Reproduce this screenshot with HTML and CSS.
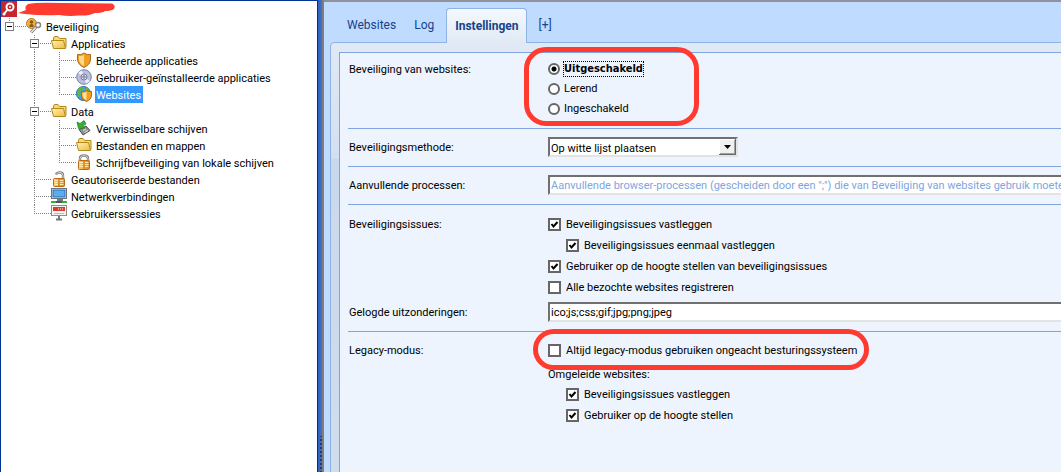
FILE: index.html
```
<!DOCTYPE html>
<html lang="nl">
<head>
<meta charset="UTF-8">
<meta name="viewport" content="width=device-width, initial-scale=1.0">
<title>Beveiliging van websites</title>
<link rel="stylesheet" href="styles.css">
</head>
<body>
    <svg class="defs" aria-hidden="true">
        <defs>
            <linearGradient id="gold" x1="0" y1="0" x2="1" y2="1">
                <stop offset="0" stop-color="#fff3b0"/>
                <stop offset="1" stop-color="#ebbb45"/>
            </linearGradient>
            <linearGradient id="orange" x1="0" y1="0" x2="1" y2="0">
                <stop offset="0" stop-color="#ffd27a"/>
                <stop offset="1" stop-color="#e0811a"/>
            </linearGradient>
            <symbol id="folder" viewBox="0 0 16 16">
                <path d="M2.500 11.500V3L3.500 1.500H7L8.500 3.500H15V12.500" fill="#f6d976" stroke="#b58a1c"/>
                <path d="M.5 5.500H12.500L14.500 13.500H2.500Z" fill="url(#gold)" stroke="#b58a1c"/>
            </symbol>
            <symbol id="shield" viewBox="0 0 16 16">
                <path d="M1.500 2.500Q5 3.500 8 1Q11 3.500 14.500 2.500V7Q14.500 12.500 8 15.500Q1.500 12.500 1.500 7Z" fill="#f0a022" stroke="#a86a14"/>
                <path d="M3 4Q6 4.500 8 2.800V14Q3 11.500 3 7Z" fill="#ffd98a"/>
            </symbol>
            <symbol id="lock" viewBox="0 0 16 16">
                <path d="M4 8V4.500Q4 1.500 8 1.500Q12 1.500 12 4.500V8" fill="none" stroke="#777" stroke-width="2.400"/>
                <path d="M4 8V4.500Q4 1.500 8 1.500Q12 1.500 12 4.500V8" fill="none" stroke="#d4d4d4"/>
                <rect x="2.500" y="6.500" width="11" height="9" rx="1" fill="url(#orange)" stroke="#bb6b17"/>
                <path d="M3.500 8.500H12.500M3.500 10.500H12.500M3.500 12.500H12.500" stroke="#ffe9a8"/>
                <path d="M8 7V15" stroke="#e58e22" stroke-width="2"/>
            </symbol>
        </defs>
    </svg>
    <div class="app">
        <nav class="sidebar">
            <ul class="tree">
                <li class="root">
                    <svg class="root_icon" viewBox="0 0 16 16">
                        <rect width="16" height="16" fill="#c4272d"/>
                        <path d="M7 8L3 13" stroke="#fff" stroke-width="2"/>
                        <circle cx="9" cy="6" r="3.500" fill="none" stroke="#fff" stroke-width="2"/>
                        <circle cx="9" cy="6" r="1" fill="#fff"/>
                        <circle cx="3" cy="13" r="1.500" fill="#fff"/>
                    </svg>
                    <svg class="scribble" viewBox="0 0 99 17">
                        <path d="M1 12Q4 11 9 9Q7 6 11 3Q20 1 45 2Q70 2 95 2.500Q99 4 97 8Q94 10 88 10Q86 12 78 12Q72 15 62 14.500Q52 15.500 42 14Q25 15 8 13Z" fill="#ff3b30"/>
                    </svg>
                </li>
                <li>
                    <span class="cell up"><button class="toggle" aria-label="Beveiliging inklappen"></button></span>
                    <svg class="icon" viewBox="0 0 16 16">
                        <circle cx="5.500" cy="5.500" r="5" fill="#f3b43e" stroke="#b87a1c"/>
                        <circle cx="5.500" cy="4" r="1.800" fill="#8a5a18"/>
                        <path d="M3.500 9V7Q5.500 5 7.500 7V9Z" fill="#8a5a18"/>
                        <path d="M5 14.500L11 8" stroke="#777" stroke-width="3"/>
                        <path d="M5 14.500L11 8" stroke="#e8e8e8" stroke-width="1.500"/>
                        <circle cx="12" cy="7" r="2.500" fill="#fff" stroke="#888" stroke-width="1.500"/>
                    </svg>
                    <a href="#beveiliging">Beveiliging</a>
                </li>
                <li>
                    <span class="cell"></span>
                    <span class="cell branch"><button class="toggle" aria-label="Applicaties inklappen"></button></span>
                    <svg class="icon"><use href="#folder"/></svg>
                    <a href="#applicaties">Applicaties</a>
                </li>
                <li>
                    <span class="cell"></span><span class="cell line"></span><span class="cell branch"></span>
                    <svg class="icon"><use href="#shield"/></svg>
                    <a href="#beheerd">Beheerde applicaties</a>
                </li>
                <li>
                    <span class="cell"></span><span class="cell line"></span><span class="cell branch"></span>
                    <svg class="icon" viewBox="0 0 16 16">
                        <circle cx="8" cy="8" r="7.300" fill="#b9bfdd" stroke="#7a80a6"/>
                        <path d="M8 8L2 4A7 7 0 0 1 6 1.500ZM8 8L14 12A7 7 0 0 1 10 14.500Z" fill="#eceffa"/>
                        <circle cx="8" cy="8" r="3" fill="#dfe2f2" stroke="#7279ab"/>
                        <circle cx="8" cy="8" r="1.200" fill="#fff" stroke="#666"/>
                    </svg>
                    <a href="#gebruiker">Gebruiker-geïnstalleerde applicaties</a>
                </li>
                <li>
                    <span class="cell"></span><span class="cell line"></span><span class="cell last"></span>
                    <svg class="icon" viewBox="0 0 16 16">
                        <circle cx="7.500" cy="7.500" r="7" fill="#4b9be0" stroke="#2b68a8"/>
                        <path d="M2 3Q5 0 8 1L7 4L4 6L5 9L3 11Q0 8 2 3ZM10 1Q13 2 14 5L10 5Z" fill="#5fb648"/>
                        <path d="M5.500 5.500Q8.500 6 10.500 4.500Q12.500 6 15.500 5.500V9Q15.500 13.500 10.500 15.500Q5.500 13.500 5.500 9Z" fill="#f0a022" stroke="#a86a14"/>
                        <path d="M6.500 6.800Q9 7 10.500 6V14Q6.500 12 6.500 9Z" fill="#ffe0a0"/>
                    </svg>
                    <a class="selected" href="#websites">Websites</a>
                </li>
                <li>
                    <span class="cell"></span>
                    <span class="cell branch"><button class="toggle" aria-label="Data inklappen"></button></span>
                    <svg class="icon"><use href="#folder"/></svg>
                    <a href="#data">Data</a>
                </li>
                <li>
                    <span class="cell"></span><span class="cell line"></span><span class="cell branch"></span>
                    <svg class="icon" viewBox="0 0 16 16">
                        <path d="M3 9.500L10 6L14 10.500L7 15Z" fill="#8e8e8e" stroke="#555"/>
                        <path d="M7 10.500L10 9M8.500 12.500L12 10.500" stroke="#eee"/>
                        <path d="M1 2L4 3.500L8 .5L10 4L6.500 6L9 8L2.500 8.500Z" fill="#35b433" stroke="#17781a" stroke-width=".7"/>
                    </svg>
                    <a href="#schijven">Verwisselbare schijven</a>
                </li>
                <li>
                    <span class="cell"></span><span class="cell line"></span><span class="cell branch"></span>
                    <svg class="icon"><use href="#folder"/></svg>
                    <a href="#mappen">Bestanden en mappen</a>
                </li>
                <li>
                    <span class="cell"></span><span class="cell line"></span><span class="cell last"></span>
                    <svg class="icon"><use href="#lock"/></svg>
                    <a href="#schrijf">Schrijfbeveiliging van lokale schijven</a>
                </li>
                <li>
                    <span class="cell"></span><span class="cell branch"></span>
                    <svg class="icon" viewBox="0 0 16 16">
                        <path d="M5 3.500Q6 1.500 9 1.500Q12 1.500 12 4.500V8" fill="none" stroke="#777" stroke-width="2.400"/>
                        <path d="M5 3.500Q6 1.500 9 1.500Q12 1.500 12 4.500V8" fill="none" stroke="#ddd"/>
                        <rect x="2.500" y="7.500" width="11" height="8" rx="1" fill="url(#orange)" stroke="#bb6b17"/>
                        <path d="M3.500 9.500H12.500M3.500 11.500H12.500M3.500 13.500H12.500" stroke="#ffe9a8"/>
                        <path d="M8 8V15" stroke="#e58e22" stroke-width="2"/>
                    </svg>
                    <a href="#geautoriseerd">Geautoriseerde bestanden</a>
                </li>
                <li>
                    <span class="cell"></span><span class="cell branch"></span>
                    <svg class="icon" viewBox="0 0 16 16">
                        <rect x=".5" y=".5" width="15" height="10" fill="#e8eef4" stroke="#6a7580"/>
                        <rect x="2" y="2" width="12" height="7" fill="#5aaef0" stroke="#2c6fb0"/>
                        <path d="M6 12H12" stroke="#777" stroke-width="2"/>
                        <path d="M0 14H5M11 14H16" stroke="#2fb52f" stroke-width="2"/>
                        <path d="M5 14H11" stroke="#555" stroke-width="2"/>
                    </svg>
                    <a href="#netwerk">Netwerkverbindingen</a>
                </li>
                <li>
                    <span class="cell"></span><span class="cell last"></span>
                    <svg class="icon" viewBox="0 0 16 16">
                        <rect x=".5" y=".5" width="15" height="10" fill="#f4f4f4" stroke="#8c8c8c"/>
                        <rect x="2" y="2" width="12" height="4" fill="#d83a2c"/>
                        <path d="M7 4H8M9 4H10M11 4H12" stroke="#fff"/>
                        <path d="M3 8.500H13" stroke="#bbb"/>
                        <path d="M8 11V15M5 14.500H11" stroke="#777" stroke-width="2"/>
                    </svg>
                    <a href="#sessies">Gebruikerssessies</a>
                </li>
            </ul>
        </nav>
        <div class="splitter"><div class="grip"></div></div>
        <main class="content">
            <div class="tabs" role="tablist">
                <button role="tab">Websites</button>
                <button role="tab">Log</button>
                <button role="tab" class="active" aria-selected="true">Instellingen</button>
                <button role="tab">[+]</button>
            </div>
            <div class="tab_content">
                <form class="settings">
                    <section>
                        <div class="field">
                            <span class="title">Beveiliging van websites:</span>
                            <div class="options radios marked">
                                <label><input type="radio" name="status" checked><b class="focus">Uitgeschakeld</b></label>
                                <label><input type="radio" name="status"><span>Lerend</span></label>
                                <label><input type="radio" name="status"><span>Ingeschakeld</span></label>
                            </div>
                        </div>
                    </section>
                    <section>
                        <div class="field">
                            <label class="title" for="methode">Beveiligingsmethode:</label>
                            <select id="methode">
                                <option>Op witte lijst plaatsen</option>
                            </select>
                        </div>
                    </section>
                    <section>
                        <div class="field">
                            <label class="title" for="processen">Aanvullende processen:</label>
                            <input type="text" id="processen" placeholder="Aanvullende browser-processen (gescheiden door een &quot;;&quot;) die van Beveiliging van websites gebruik moeten maken">
                        </div>
                    </section>
                    <section>
                        <div class="field">
                            <span class="title">Beveiligingsissues:</span>
                            <div class="options">
                                <label><input type="checkbox" checked><span>Beveiligingsissues vastleggen</span></label>
                                <label class="sub"><input type="checkbox" checked><span>Beveiligingsissues eenmaal vastleggen</span></label>
                                <label><input type="checkbox" checked><span>Gebruiker op de hoogte stellen van beveiligingsissues</span></label>
                                <label><input type="checkbox"><span>Alle bezochte websites registreren</span></label>
                            </div>
                        </div>
                        <div class="field">
                            <label class="title" for="uitzonderingen">Gelogde uitzonderingen:</label>
                            <input type="text" id="uitzonderingen" value="ico;js;css;gif;jpg;png;jpeg">
                        </div>
                    </section>
                    <section>
                        <div class="field">
                            <span class="title">Legacy-modus:</span>
                            <div class="options">
                                <label class="marked legacy"><input type="checkbox"><span>Altijd legacy-modus gebruiken ongeacht besturingssysteem</span></label>
                                <p>Omgeleide websites:</p>
                                <label class="sub"><input type="checkbox" checked><span>Beveiligingsissues vastleggen</span></label>
                                <label class="sub"><input type="checkbox" checked><span>Gebruiker op de hoogte stellen</span></label>
                            </div>
                        </div>
                    </section>
                </form>
            </div>
        </main>
    </div>
</body>
</html>
```
FILE: styles.css
```
*,*::after{margin:0;padding:0;box-sizing:border-box}
body{font-size:11px;font-family:Roboto,Tahoma,sans-serif;line-height:17px;color:#000}
ul,li{list-style:none}
button,input,select{font:inherit;color:inherit}
.defs {position: absolute; width: 0; height: 0;}
.app {display: flex; height: 100vh; overflow: hidden;}

/* tree */
.sidebar {flex: 0 0 317px; background-color: #fff; border-top: 1px solid #003399; border-left: 1px solid #003399; overflow: hidden;}
.tree li {display: flex; height: 17px; white-space: nowrap;}
.tree a {margin-left: 3px; padding: 2px 2px 0 1px; line-height: 15px; color: #000; text-decoration: none;}
.tree a.selected {background-color: #3399ff; color: #fff;}
.icon {flex: none; width: 16px; height: 16px;}
.root_icon {flex: none; width: 16px; height: 16px;}
.scribble {flex: none; width: 99px; height: 17px;}
.cell {
    flex: none; width: 25px; height: 17px; padding: 4px; display: flex;
    --v: repeating-linear-gradient(#808080 0 1px, transparent 1px 2px);
    --h: repeating-linear-gradient(90deg, #808080 0 1px, transparent 1px 2px);
    background-repeat: no-repeat;
}
.cell.up {background-image: var(--v), var(--h); background-position: 8px 0, 8px 8px; background-size: 1px 8px, 17px 1px;}
.cell.line {background-image: var(--v); background-position: 8px 0; background-size: 1px 17px;}
.cell.branch {background-image: var(--v), var(--h); background-position: 8px 0, 8px 8px; background-size: 1px 17px, 17px 1px;}
.cell.last {background-image: var(--v), var(--h); background-position: 8px 0, 8px 8px; background-size: 1px 9px, 17px 1px;}
.toggle {
    width: 9px; height: 9px; border: 1px solid #808080;
    background: linear-gradient(#000, #000) center / 5px 1px no-repeat #fff;
}

.splitter {
    flex: 0 0 7px; display: flex; align-items: flex-end;
    border-left: 1px solid #0a2a80; border-right: 2px solid #807e78;
    background: linear-gradient(90deg, #2f5fbd, #4273cf);
}
.grip {
    width: 4px; height: 36px;
    background: linear-gradient(#fff, #fff) 2px 1px / 2px 2px no-repeat, linear-gradient(#26386a, #26386a) 0 2px / 3px 2px no-repeat;
    background-size: 4px 4px;
    background-image: conic-gradient(#fff 0 25%, #26386a 25% 75%, transparent 75%);
    background-repeat: repeat-y;
}

/* tabs */
.content {flex: 1; min-width: 0; display: flex; flex-direction: column; border-top: 2px solid #8f9399; background-color: #bfdbff; overflow: hidden;}
.tabs {display: flex; height: 41px; padding: 6px 0 0 14px;}
.tabs button {height: 35px; padding: 0 9px; border: 0; background: none; font-size: 12px; color: #15428b;}
.tabs button.active {
    margin: 0 2px 0 3px; padding: 0 8px; border: 1px solid #8db2e3; border-bottom: 0; border-radius: 4px 4px 0 0;
    background: linear-gradient(#f5f9fe, #e0e9f4); font-weight: bold; position: relative; z-index: 1;
}
.tab_content {
    flex: 1; margin: -1px -20px 0 6px; padding: 9px 0 0 8px;
    border: 1px solid #8db2e3; border-bottom: 0; border-radius: 5px 0 0 0;
    background: linear-gradient(#e0e9f4, #d3e0f0 115px, #c9d9ec 116px, #cfddec);
}

/* form */
.settings {height: 100%; padding: 0 0 0 8px; border: 1px solid #7ea5e0; border-bottom: 0; background-color: #edf4fd;}
section {padding: 8px 0 9px; border-bottom: 1px solid #7ea5e0;}
section:last-child {border: 0;}
section:first-child {padding-top: 6px;}
section:nth-child(4) {padding-top: 9px;}
.field {display: flex; align-items: flex-start; line-height: 20px;}
.field + .field {margin-top: 4px;}
.title {flex: 0 0 200px; padding: 1px 0 0 1px; line-height: 19px;}
.options label {display: flex; align-items: center; gap: 5px; width: max-content; height: 21px;}
.options.radios label {height: 20px; gap: 4px;}
.options .sub {margin-left: 18px;}
.options p {height: 23px; padding-top: 4px;}
.focus {outline: 1px dotted #000; font-family: "DejaVu Sans Condensed", Tahoma, sans-serif; line-height: 14px;}
input[type="radio"], input[type="checkbox"] {appearance: none; width: 13px; height: 13px; border: 2px solid #666; background-color: #fff;}
input[type="radio"] {width: 12px; height: 12px; border-radius: 50%;}
input[type="radio"]:checked {background-image: radial-gradient(#000 0 2px, transparent 3px);}
input[type="checkbox"]:checked {
    background-image: url("data:image/svg+xml,%3Csvg xmlns='http://www.w3.org/2000/svg' viewBox='0 0 9 9'%3E%3Cpath d='M1.500 4L3.500 6.500L7.500 2' fill='none' stroke='%23000' stroke-width='2'/%3E%3C/svg%3E");
}
input[type="text"], select {height: 20px; border: 2px solid; border-color: #707070 #e3e3e3 #e3e3e3 #707070; border-radius: 0; background-color: #fff; outline: 0;}
input[type="text"] {flex: 1; min-width: 0; padding: 1px 1px 0;}
input::placeholder {color: #7ea5e0; opacity: 1;}
select {
    appearance: none; width: 190px; padding: 0 18px 0 1px;
    background-image: url("data:image/svg+xml,%3Csvg xmlns='http://www.w3.org/2000/svg' width='17' height='16'%3E%3Crect width='17' height='16' fill='%23696969'/%3E%3Crect width='16' height='15' fill='%23fff'/%3E%3Crect x='1' y='1' width='15' height='14' fill='%23a0a0a0'/%3E%3Crect x='1' y='1' width='14' height='13' fill='%23f0f0f0'/%3E%3Cpath d='M5 6H12L8.500 10Z'/%3E%3C/svg%3E");
    background-repeat: no-repeat; background-position: right center;
}

/* red rings around the important settings */
.marked {position: relative;}
.marked::after {
    content: ""; position: absolute; left: -24px; top: -12px; width: 175px; height: 79px;
    border: 5px solid #ff3b30; border-radius: 22px; pointer-events: none;
}
.marked.legacy::after {left: -15px; top: -11px; width: 336px; height: 41px; border-radius: 21px;}
```
